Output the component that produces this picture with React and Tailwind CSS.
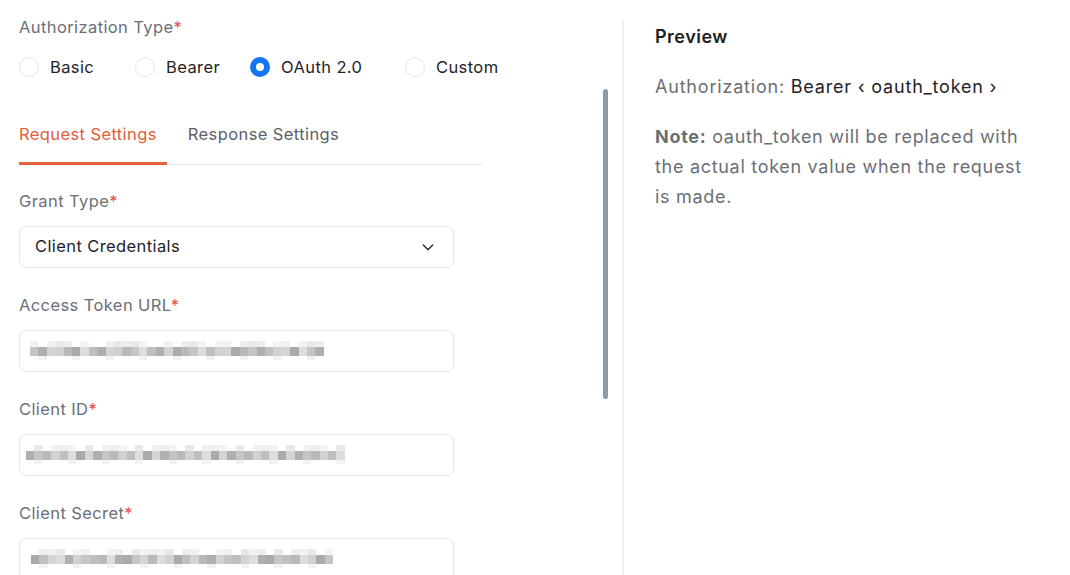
import { useState } from "react";

const shades = [
  "bg-[#c4c6c6]",
  "bg-[#b0aeb2]",
  "bg-[#d2d5d5]",
  "bg-[#a8aaab]",
  "bg-[#dcdede]",
  "bg-[#bcc0bf]",
  "bg-[#cfd1d2]",
  "bg-[#b7b9ba]",
];
const faint = ["bg-[#eeeeee]", "bg-[#f3f3f3]", "bg-white", "bg-[#e9e9ea]", "bg-white", "bg-[#f1f1f1]"];

/* valeur masquée (pixelisée) */
function Mosaic({ cells = 36, seed = 1 }) {
  const pick = (arr, i, k) => arr[(i * 7 + seed * 3 + k * 5 + ((i * seed) % 5)) % arr.length];
  return (
    <div className="flex flex-col">
      <div className="flex h-[6px]">
        {Array.from({ length: cells }).map((_, i) => (
          <div key={i} className={`w-[8.4px] ${pick(faint, i, 1)}`} />
        ))}
      </div>
      <div className="flex h-[9px]">
        {Array.from({ length: cells }).map((_, i) => (
          <div key={i} className={`w-[8.4px] ${pick(shades, i, 2)}`} />
        ))}
      </div>
      <div className="flex h-[4px]">
        {Array.from({ length: cells }).map((_, i) => (
          <div key={i} className={`w-[8.4px] ${i % 4 === 1 ? "bg-[#f2f2f2]" : "bg-white"}`} />
        ))}
      </div>
    </div>
  );
}

function Label({ children }) {
  return (
    <div className="text-[16.5px] tracking-[0.4px] leading-6 text-[#6b6f76]">
      {children}
      <span className="text-[#e0524f]">*</span>
    </div>
  );
}

function Radio({ label, checked, onClick, width }) {
  return (
    <button onClick={onClick} className={`flex items-center gap-[11px] ${width}`}>
      {checked ? (
        <span className="w-5 h-5 rounded-full bg-[#1673f2] flex items-center justify-center">
          <span className="w-[8px] h-[8px] rounded-full bg-white" />
        </span>
      ) : (
        <span className="w-5 h-5 rounded-full border border-[#e3e5e8] bg-white" />
      )}
      <span className="text-[16.5px] tracking-[0.4px] text-[#1f2329]">{label}</span>
    </button>
  );
}

function Field({ label, children }) {
  return (
    <div className="flex flex-col">
      <Label>{label}</Label>
      <div className="mt-[13px] h-[42px] w-[435px] rounded-[7px] border border-[#e6e7ea] bg-white flex items-center">
        {children}
      </div>
    </div>
  );
}

export default function App() {
  const [auth, setAuth] = useState("oauth");
  const [tab, setTab] = useState("request");

  const tabCls = (key) =>
    `pb-[16px] text-[16.5px] tracking-[0.4px] leading-6 border-b-[3px] -mb-px ${
      tab === key ? "text-[#e35d37] border-[#e6613c]" : "text-[#5d6168] border-transparent"
    }`;

  return (
    <div className="w-[1070px] h-[575px] overflow-hidden bg-white flex font-['Inter',sans-serif]">
      {/* Coluna esquerda */}
      <div className="relative w-[624px] shrink-0 pl-[19px] pt-[15px]">
        <Label>Authorization Type</Label>
        <div className="mt-[16px] flex items-center">
          <Radio label="Basic" width="w-[116px]" checked={auth === "basic"} onClick={() => setAuth("basic")} />
          <Radio label="Bearer" width="w-[115px]" checked={auth === "bearer"} onClick={() => setAuth("bearer")} />
          <Radio label="OAuth 2.0" width="w-[155px]" checked={auth === "oauth"} onClick={() => setAuth("oauth")} />
          <Radio label="Custom" width="w-[100px]" checked={auth === "custom"} onClick={() => setAuth("custom")} />
        </div>

        {/* Abas */}
        <div className="mt-[42px] w-[463px] flex border-b border-[#e3e4e7]">
          <button onClick={() => setTab("request")} className={`${tabCls("request")} pr-[10px]`}>
            Request Settings
          </button>
          <button onClick={() => setTab("response")} className={`${tabCls("response")} ml-[11px] px-[10px]`}>
            Response Settings
          </button>
        </div>

        <div className="mt-[24px] flex flex-col gap-[25px]">
          <Field label="Grant Type">
            <div className="flex-1 flex items-center justify-between pl-[15px] pr-[17px]">
              <span className="text-[16.5px] tracking-[0.4px] text-[#1f2329]">Client Credentials</span>
              <svg width="16" height="16" viewBox="0 0 24 24" fill="none" stroke="#2b2f35" strokeWidth="2.2" strokeLinecap="round" strokeLinejoin="round">
                <path d="M5 9l7 7 7-7" />
              </svg>
            </div>
          </Field>
          <Field label="Access Token URL">
            <div className="pl-[10px]">
              <Mosaic cells={35} seed={2} />
            </div>
          </Field>
          <Field label="Client ID">
            <div className="pl-[6px]">
              <Mosaic cells={38} seed={5} />
            </div>
          </Field>
          <Field label="Client Secret">
            <div className="pl-[11px]">
              <Mosaic cells={36} seed={3} />
            </div>
          </Field>
        </div>

        {/* barra de rolagem */}
        <div className="absolute left-[603px] top-[89px] w-[5px] h-[310px] rounded-full bg-[#8e9ba8]" />
        <div className="absolute right-0 top-[20px] bottom-0 w-[2px] bg-[#eeeff1]" />
      </div>

      {/* Pré-visualização */}
      <div className="pl-[31px] pt-[25px] pr-[30px]">
        <h3 className="text-[18px] tracking-[0.5px] leading-6 font-semibold text-[#1c1f24]">Preview</h3>
        <p className="mt-[26px] text-[18px] tracking-[0.8px] leading-6 text-[#6b6f76]">
          Authorization: <span className="text-[#1f2329]">Bearer &lsaquo; oauth_token &rsaquo;</span>
        </p>
        <p className="mt-[23px] w-[378px] text-[18px] tracking-[0.7px] leading-[30px] text-[#6b6f76]">
          <span className="font-bold">Note:</span> oauth_token will be replaced with the actual token value when the request is made.
        </p>
      </div>
    </div>
  );
}
